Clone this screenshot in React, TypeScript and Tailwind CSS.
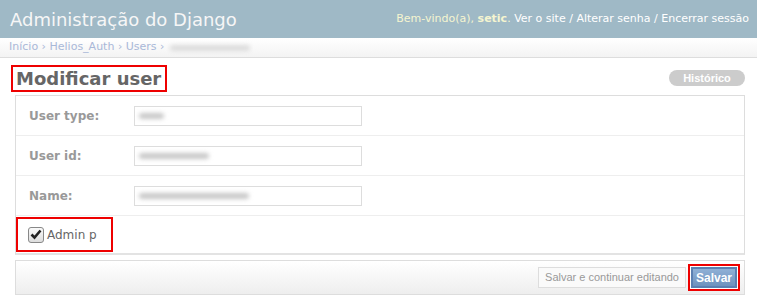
const blur = "inline-block h-[6px] rounded-full bg-[#c8c8c8] blur-[2px]"

function Field({ label, blurW }: { label: string; blurW: string }) {
  return (
    <div className="flex items-center h-10 border-b border-[#eee] pl-[13px]">
      <span className="w-[105px] text-[12px] font-bold text-[#999]">{label}</span>
      <div className="w-[228px] h-5 border border-[#ddd] bg-white flex items-center px-[4px]">
        <span className={`${blur} ${blurW}`}></span>
      </div>
    </div>
  )
}

export default function App() {
  return (
    <div className="w-[757px] h-[300px] bg-white overflow-hidden font-['DejaVu_Sans',sans-serif]">
      <header className="h-[38px] bg-[#9fb9c6] flex items-center justify-between pl-[10px] pr-[8px]">
        <h1 className="text-[18px] text-[#f6f6f6]">Administração do Django</h1>
        <div className="text-[11px] text-white">
          <span className="text-[#f5f5d0]">
            Bem-vindo(a), <strong>setic</strong>.
          </span>{" "}
          Ver o site / Alterar senha / Encerrar sessão
        </div>
      </header>

      <div className="h-5 flex items-center pl-[9px] text-[11px] text-[#a9b8d8] bg-gradient-to-b from-white to-[#f3f3f3] border-b border-[#ddd]">
        Início › Helios_Auth › Users ›
        <span className={`${blur} w-[80px] ml-[6px] bg-[#dcdcdc]`}></span>
      </div>

      <div className="pl-[15px] pr-[12px] pt-[7px]">
        <div className="flex items-start justify-between">
          <h2 className="ml-[-4px] border-2 border-[#e00] pl-[3px] pr-[4px] h-[27px] flex items-center text-[18px] font-bold text-[#666]">
            Modificar user
          </h2>
          <span className="mt-[5px] h-[16px] w-[76px] rounded-full bg-[#ccc] text-white text-[11px] font-bold font-['Liberation_Sans',sans-serif] flex items-center justify-center">
            Histórico
          </span>
        </div>

        <div className="mt-[3px] border border-[#ddd] border-b-2 border-b-[#e3e3e3]">
          <Field label="User type:" blurW="w-[25px]" />
          <Field label="User id:" blurW="w-[70px]" />
          <Field label="Name:" blurW="w-[110px]" />
          <div className="h-[37px] flex items-center">
            <div className="w-[97px] h-[35px] border-2 border-[#e00] flex items-center pl-[10px] gap-[3px]">
              <span className="w-[16px] h-[16px] rounded-[3px] border border-[#888] bg-gradient-to-b from-[#fafafa] to-[#ddd] flex items-center justify-center">
                <svg width="12" height="11" viewBox="0 0 12 11">
                  <path d="M1.5 5.5 L4.5 8.5 L10.5 1.5" fill="none" stroke="#222" strokeWidth="2.6" />
                </svg>
              </span>
              <span className="text-[12px] text-[#666]">Admin p</span>
            </div>
          </div>
        </div>

        <div className="mt-[5px] h-[35px] border border-[#ddd] bg-gradient-to-b from-white to-[#eee] flex items-center justify-end pr-[4px] gap-[2px] font-['Liberation_Sans',sans-serif]">
          <span className="h-[21px] px-[6px] border border-[#ddd] bg-[#fafafa] text-[11px] text-[#999] flex items-center">
            Salvar e continuar editando
          </span>
          <span className="border-2 border-[#e00] p-[1px] bg-white">
            <span className="h-[21px] w-[46px] border-2 border-[#5b80b2] bg-gradient-to-b from-[#8fb0d6] to-[#6e92be] text-white text-[12px] font-bold flex items-center justify-center">
              Salvar
            </span>
          </span>
        </div>
      </div>
    </div>
  )
}
